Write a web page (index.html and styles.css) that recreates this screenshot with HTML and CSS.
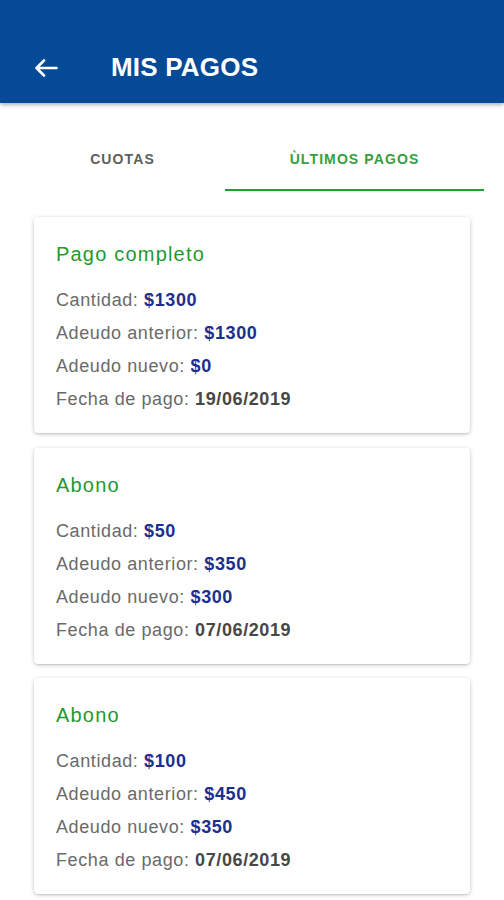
FILE: index.html
```html
<!DOCTYPE html>
<html lang="es">
<head>
<meta charset="utf-8">
<title>Mis pagos</title>
<link rel="stylesheet" href="styles.css">
</head>
<body>
<header class="appbar">
  <svg class="back" width="24" height="18" viewBox="0 0 24 18" aria-hidden="true">
    <path d="M22.5 9H2.5M10 1.5L2.5 9L10 16.5" fill="none" stroke="#fff" stroke-width="2.6" stroke-linecap="round" stroke-linejoin="round"/>
  </svg>
  <h1 class="title">MIS PAGOS</h1>
</header>
<nav class="tabs">
  <div class="tab tab-left">CUOTAS</div>
  <div class="tab tab-right active">ÙLTIMOS PAGOS</div>
</nav>
<main class="list">
  <section class="card">
    <h2 class="card-title">Pago completo</h2>
    <p class="row">Cantidad: <b class="money">$1300</b></p>
    <p class="row">Adeudo anterior: <b class="money">$1300</b></p>
    <p class="row">Adeudo nuevo: <b class="money">$0</b></p>
    <p class="row">Fecha de pago: <b class="date">19/06/2019</b></p>
  </section>
  <section class="card">
    <h2 class="card-title">Abono</h2>
    <p class="row">Cantidad: <b class="money">$50</b></p>
    <p class="row">Adeudo anterior: <b class="money">$350</b></p>
    <p class="row">Adeudo nuevo: <b class="money">$300</b></p>
    <p class="row">Fecha de pago: <b class="date">07/06/2019</b></p>
  </section>
  <section class="card">
    <h2 class="card-title">Abono</h2>
    <p class="row">Cantidad: <b class="money">$100</b></p>
    <p class="row">Adeudo anterior: <b class="money">$450</b></p>
    <p class="row">Adeudo nuevo: <b class="money">$350</b></p>
    <p class="row">Fecha de pago: <b class="date">07/06/2019</b></p>
  </section>
</main>
</body>
</html>
```
FILE: styles.css
```css
* { box-sizing: border-box; }
html, body { margin: 0; padding: 0; }
body {
  background: #ffffff;
  font-family: "Liberation Sans", Arial, Helvetica, sans-serif;
  width: 504px;
  height: 900px;
  overflow: hidden;
}
.appbar {
  height: 103px;
  background: #044a96;
  display: flex;
  align-items: center;
  padding-left: 34px;
  padding-top: 32px;
  box-shadow: 0 2px 4px rgba(0,0,0,0.3);
  position: relative;
  z-index: 1;
}
.back { display: block; flex: none; }
.title {
  margin: 0 0 0 53px;
  color: #ffffff;
  font-size: 26px;
  font-weight: bold;
  letter-spacing: 0.2px;
}
.tabs {
  display: flex;
  margin: 40px 0 0 20px;
  width: 464px;
}
.tab {
  height: 48px;
  padding-top: 8px;
  text-align: center;
  font-size: 14px;
  line-height: 16px;
  letter-spacing: 1.1px;
  color: #555555;
  border-bottom: 2px solid transparent;
  font-weight: bold;
}
.tab-left { width: 205px; color: #5e5e5e; }
.tab-right { width: 259px; }
.tab.active { color: #35a042; border-bottom-color: #22a02f; }
.list {
  display: flex;
  flex-direction: column;
  gap: 14.5px;
  margin: 26px 0 0 34px;
  width: 436px;
}
.card {
  height: 216px;
  background: #ffffff;
  border-radius: 4px;
  box-shadow: 0 1px 4px rgba(0,0,0,0.22), 0 1px 1px rgba(0,0,0,0.08);
  padding: 25px 22px 0 22px;
}
.card-title {
  margin: 0 0 18px 0;
  font-size: 20px;
  line-height: 24px;
  font-weight: normal;
  letter-spacing: 1.2px;
  color: #1f9a2d;
}
.row {
  margin: 0;
  font-size: 18px;
  line-height: 33px;
  letter-spacing: 0.6px;
  color: #6a6a6a;
}
.money { color: #1b2f8e; font-weight: bold; }
.date { color: #474747; font-weight: bold; }
```
